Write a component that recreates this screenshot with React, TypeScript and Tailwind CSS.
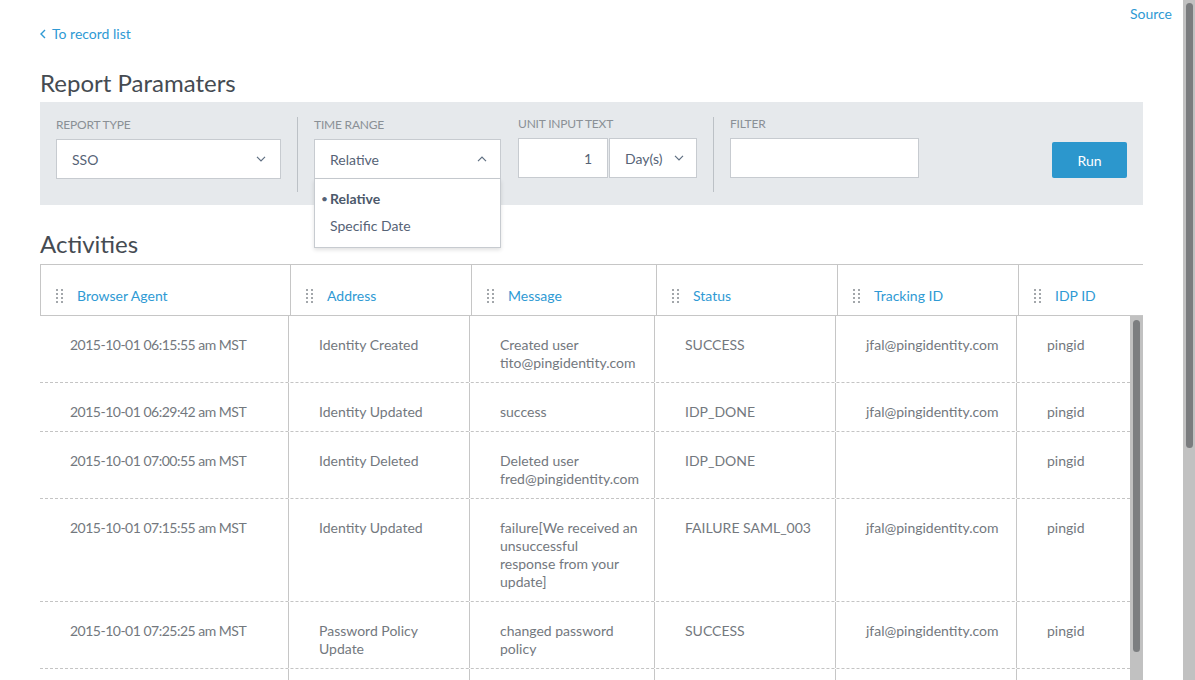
import React from "react"

type Column = { key: string; title: string; width: number }

const columns: Column[] = [
  { key: "agent", title: "Browser Agent", width: 250 },
  { key: "address", title: "Address", width: 181 },
  { key: "message", title: "Message", width: 185 },
  { key: "status", title: "Status", width: 181 },
  { key: "tracking", title: "Tracking ID", width: 181 },
  { key: "idp", title: "IDP ID", width: 181 }
]

// each cell is a list of lines, so wrapping matches the design
const rows: Record<string, string[]>[] = [
  {
    agent: ["2015-10-01 06:15:55 am MST"],
    address: ["Identity Created"],
    message: ["Created user", "tito@pingidentity.com"],
    status: ["SUCCESS"],
    tracking: ["jfal@pingidentity.com"],
    idp: ["pingid"]
  },
  {
    agent: ["2015-10-01 06:29:42 am MST"],
    address: ["Identity Updated"],
    message: ["success"],
    status: ["IDP_DONE"],
    tracking: ["jfal@pingidentity.com"],
    idp: ["pingid"]
  },
  {
    agent: ["2015-10-01 07:00:55 am MST"],
    address: ["Identity Deleted"],
    message: ["Deleted user", "fred@pingidentity.com"],
    status: ["IDP_DONE"],
    tracking: [],
    idp: ["pingid"]
  },
  {
    agent: ["2015-10-01 07:15:55 am MST"],
    address: ["Identity Updated"],
    message: ["failure[We received an", "unsuccessful", "response from your", "update]"],
    status: ["FAILURE SAML_003"],
    tracking: ["jfal@pingidentity.com"],
    idp: ["pingid"]
  },
  {
    agent: ["2015-10-01 07:25:25 am MST"],
    address: ["Password Policy", "Update"],
    message: ["changed password", "policy"],
    status: ["SUCCESS"],
    tracking: ["jfal@pingidentity.com"],
    idp: ["pingid"]
  },
  // next row only peeks in below the fold
  { agent: [" "], address: [], message: [], status: [], tracking: [], idp: [] }
]

function Chevron({ up = false }: { up?: boolean }) {
  return (
    <svg width="10" height="6" viewBox="0 0 10 6" className="shrink-0">
      <path
        d={up ? "M1 5.2 L5 1.2 L9 5.2" : "M1 0.8 L5 4.8 L9 0.8"}
        fill="none"
        stroke="#5f6f82"
        strokeWidth="1.2"
      />
    </svg>
  )
}

function Grip() {
  return (
    <div className="grid w-[7px] shrink-0 grid-cols-2 gap-x-[3px] gap-y-[2px]">
      {Array.from({ length: 8 }).map((_, i) => (
        <span key={i} className="block size-[2px] bg-[#a3a7ab]" />
      ))}
    </div>
  )
}

function FieldLabel({ children }: { children: React.ReactNode }) {
  return (
    <div className="mb-[8px] h-[13px] text-[12px] leading-[13px] tracking-[-0.2px] text-[#8a9096] uppercase">
      {children}
    </div>
  )
}

function Divider() {
  return <div className="mx-[16px] w-px self-stretch bg-[#bcc1c6]" />
}

function ParamsPanel() {
  return (
    <div className="mt-[5px] flex items-start bg-[#e6e9ec] pt-[15px] pr-[16px] pb-[13px] pl-[16px]">
      <div className="flex w-[225px] flex-col pt-[1px]">
        <FieldLabel>Report Type</FieldLabel>
        <div className="flex h-[40px] items-center justify-between border border-[#c7cbd0] bg-white pr-[14px] pl-[15px] text-[14px] text-[#566376]">
          <span>SSO</span>
          <Chevron />
        </div>
      </div>
      <div className="flex h-[75px] items-stretch">
        <Divider />
      </div>
      <div className="relative flex w-[187px] flex-col pt-[1px]">
        <FieldLabel>Time Range</FieldLabel>
        <div className="flex h-[40px] items-center justify-between border border-[#c7cbd0] bg-white pr-[13px] pl-[15px] text-[14px] text-[#566376]">
          <span>Relative</span>
          <Chevron up />
        </div>
        <div className="absolute top-[62px] left-0 z-10 w-[187px] border border-t-0 border-[#c7cbd0] bg-white pt-[10px] pb-[12px] text-[14px] text-[#566376] shadow-[0_2px_4px_rgba(0,0,0,0.12)]">
          <div className="flex h-[19px] items-center">
            <span className="w-[15px] pl-[6px] text-[12px]">•</span>
            <span className="font-bold text-[#4c596b]">Relative</span>
          </div>
          <div className="mt-[8px] flex h-[19px] items-center pl-[15px]">Specific Date</div>
        </div>
      </div>
      <div className="ml-[17px] flex flex-col">
        <FieldLabel>Unit Input Text</FieldLabel>
        <div className="flex h-[40px]">
          <div className="flex w-[90px] items-center justify-end border border-[#c7cbd0] bg-white pr-[15px] text-[14px] text-[#566376]">
            1
          </div>
          <div className="ml-px flex w-[88px] items-center justify-between border border-[#c7cbd0] bg-white pr-[12px] pl-[15px] text-[14px] text-[#566376]">
            <span>Day(s)</span>
            <Chevron />
          </div>
        </div>
      </div>
      <div className="flex h-[75px] items-stretch">
        <Divider />
      </div>
      <div className="flex w-[189px] flex-col">
        <FieldLabel>Filter</FieldLabel>
        <div className="h-[40px] border border-[#c7cbd0] bg-white" />
      </div>
      <div className="flex flex-1 justify-end pt-[25px]">
        <button className="h-[36px] w-[75px] rounded-[2px] bg-[#2c97cd] text-[14px] text-white">
          Run
        </button>
      </div>
    </div>
  )
}

function ActivitiesTable() {
  return (
    <div className="mt-[6px] flex min-h-0 flex-1 flex-col">
      <div className="flex h-[52px] shrink-0 overflow-hidden border-y border-l border-[#c6c6c6]">
        {columns.map((c) => (
          <div
            key={c.key}
            style={{ width: c.width }}
            className="flex shrink-0 items-center gap-[14px] border-r border-[#c6c6c6] pt-[11px] pl-[15px] text-[14px] text-[#2f9ad4]"
          >
            <Grip />
            <span>{c.title}</span>
          </div>
        ))}
      </div>
      <div className="flex min-h-0 flex-1">
        <div className="min-w-0 flex-1 overflow-hidden">
          {rows.map((r, i) => (
            <div key={i} className="flex border-b border-dashed border-[#c4c4c4]">
              {columns.map((c, j) => (
                <div
                  key={c.key}
                  style={{ width: j === 0 ? c.width - 1 : c.width }}
                  className={
                    j === 0
                      ? "shrink-0 border-r border-[#c6c6c6] pt-[20px] pr-[10px] pb-[10px] pl-[30px] text-[14px] leading-[18px] tracking-[-0.5px] text-[#73787e]"
                      : "shrink-0 border-r border-[#c6c6c6] pt-[20px] pr-[10px] pb-[10px] pl-[30px] text-[14px] leading-[18px] text-[#73787e]"
                  }
                >
                  {r[c.key].map((line, k) => (
                    <div key={k} className="whitespace-pre">
                      {line}
                    </div>
                  ))}
                </div>
              ))}
            </div>
          ))}
        </div>
        <div className="flex w-[13px] shrink-0 justify-center bg-[#c1c1c1] pt-[4px]">
          <div className="h-[332px] w-[7px] rounded-[4px] bg-[#7c7e80]" />
        </div>
      </div>
    </div>
  )
}

export default function App() {
  return (
    <div className="flex h-[680px] w-[1195px] overflow-hidden bg-white font-['Lato','Liberation_Sans',sans-serif]">
      <div className="flex min-w-0 flex-1 flex-col">
        <div className="flex justify-end pt-[5px] pr-[11px]">
          <a className="text-[14px] leading-[18px] text-[#2f9ad4]">Source</a>
        </div>
        <div className="flex flex-1 flex-col px-[40px]">
          <a className="mt-[2px] flex items-center gap-[6px] text-[14px] leading-[18px] text-[#2f9ad4]">
            <svg width="6" height="10" viewBox="0 0 6 10">
              <path d="M5 1 L1 5 L5 9" fill="none" stroke="#2f9ad4" strokeWidth="1.4" />
            </svg>
            <span>To record list</span>
          </a>
          <h1 className="mt-[26px] text-[24px] leading-[28px] text-[#454b52]">Report Paramaters</h1>
          <ParamsPanel />
          <h2 className="mt-[25px] text-[24px] leading-[28px] text-[#454b52]">Activities</h2>
          <ActivitiesTable />
        </div>
      </div>
      <div className="flex w-[12px] shrink-0 justify-center bg-[#c1c1c1] pt-[3px]">
        <div className="h-[445px] w-[7px] rounded-[4px] bg-[#7a7c7e]" />
      </div>
    </div>
  )
}
